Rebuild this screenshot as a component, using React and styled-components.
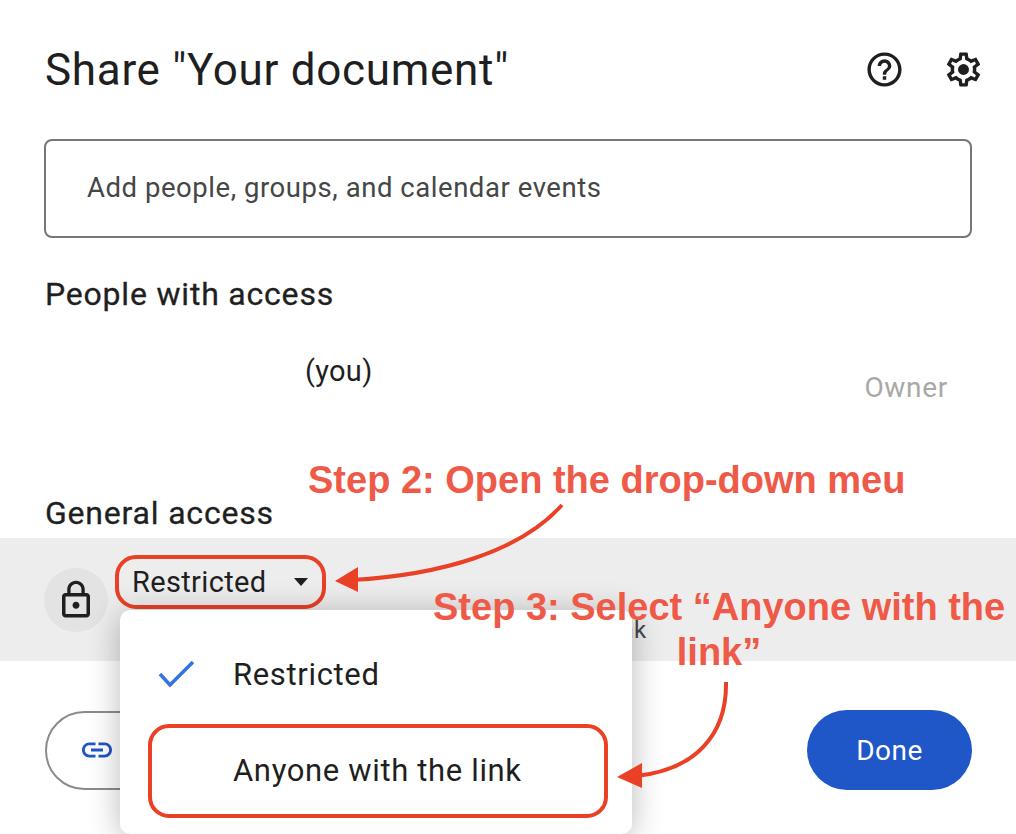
import React from 'react'
import styled, { createGlobalStyle } from 'styled-components'
import { MdHelpOutline, MdLink, MdLockOutline } from 'react-icons/md'

const Global = createGlobalStyle`
  html, body { margin: 0; padding: 0; background: #fff; }
  body { font-family: Roboto, "Liberation Sans", sans-serif; color: #1f1f1f; }
`

const Page = styled.div`
  position: relative;
  width: 1016px;
  height: 834px;
  overflow: hidden;
  background: #fff;
`

const Header = styled.div`
  display: flex;
  align-items: center;
  height: 139px;
  padding: 0 32px 0 45px;
  box-sizing: border-box;
`

const Title = styled.h1`
  flex: 1;
  margin: 0;
  font-size: 44px;
  font-weight: 400;
  letter-spacing: 0.7px;
  line-height: 48px;
`

const IconBtn = styled.div`
  display: flex;
  align-items: center;
  justify-content: center;
  width: 41px;
  height: 41px;
  margin-left: ${p => p.$gap || 0}px;
  color: #1f1f1f;
`

const SearchBox = styled.div`
  display: flex;
  align-items: center;
  height: 99px;
  width: 928px;
  margin-left: 44px;
  padding: 0 0 3px 41px;
  box-sizing: border-box;
  border: 2px solid #747775;
  border-radius: 8px;
  font-size: 27.5px;
  letter-spacing: 0.55px;
  color: #444746;
`

const SectionTitle = styled.h2`
  margin: ${p => p.$top}px 0 0 45px;
  font-size: 32px;
  font-weight: 400;
  letter-spacing: 0.8px;
  line-height: 38px;
  color: #1f1f1f;
  -webkit-text-stroke: 0.3px #1f1f1f;
`

const PersonRow = styled.div`
  display: flex;
  height: 181px;
  padding-left: 305px;
  padding-right: 68px;
`

const You = styled.span`
  flex: 1;
  margin-top: 42px;
  font-size: 29px;
  font-weight: 400;
  letter-spacing: 0.3px;
  line-height: 32px;
`

const Owner = styled.span`
  margin-top: 59px;
  font-size: 28px;
  letter-spacing: 0.7px;
  line-height: 32px;
  color: #a8a8a8;
`

const AccessBand = styled.div`
  display: flex;
  align-items: flex-start;
  height: 123px;
  margin-top: 6px;
  padding: 30px 0 0 44px;
  box-sizing: border-box;
  background: #ededed;
`

const LockCircle = styled.div`
  display: flex;
  align-items: center;
  justify-content: center;
  width: 64px;
  height: 64px;
  border-radius: 50%;
  background: #e3e3e3;
  color: #1f1f1f;
`

const AccessInfo = styled.div`
  margin-left: 12px;
`

const Select = styled.div`
  display: flex;
  align-items: center;
  height: 54px;
  width: 211px;
  margin: -13px 0 0 -5px;
  padding-left: 13px;
  box-sizing: border-box;
  border: 4.5px solid #ea4025;
  border-radius: 21px;
  font-size: 29px;
  letter-spacing: 0.35px;
`

const Caret = styled.span`
  width: 0;
  height: 0;
  margin-left: 28px;
  border-left: 7.5px solid transparent;
  border-right: 7.5px solid transparent;
  border-top: 8px solid #1f1f1f;
`

const AccessHint = styled.div`
  margin-top: 6px;
  padding-left: 11px;
  font-size: 24px;
  letter-spacing: 0.45px;
  line-height: 30px;
  color: #444746;
  white-space: nowrap;
`

const Footer = styled.div`
  display: flex;
  align-items: center;
  justify-content: space-between;
  margin-top: 49px;
  padding: 0 44px 0 45px;
`

const CopyLink = styled.div`
  display: flex;
  align-items: center;
  gap: 12px;
  width: 360px;
  height: 79px;
  padding-left: 32px;
  box-sizing: border-box;
  border: 2px solid #8a8c8a;
  border-radius: 40px;
  font-size: 26px;
  font-weight: 500;
  color: #1f56c8;
`

const Done = styled.div`
  display: flex;
  align-items: center;
  justify-content: center;
  width: 165px;
  height: 80px;
  border-radius: 40px;
  background: #1f56c8;
  color: #fff;
  font-size: 28px;
  font-weight: 400;
  letter-spacing: 0.5px;
`

/* things lying over the dialog */
const Menu = styled.div`
  position: absolute;
  left: 120px;
  top: 610px;
  width: 512px;
  height: 224px;
  border-radius: 10px;
  background: #fff;
  box-shadow: 0 4px 32px rgba(0, 0, 0, 0.28);
`

const MenuItem = styled.div`
  display: flex;
  align-items: center;
  height: 96px;
  padding-left: 113px;
  font-size: 31px;
  letter-spacing: 0.65px;
  position: relative;
  margin-top: ${p => p.$top || 0}px;
`

const Check = styled.svg`
  position: absolute;
  left: 38px;
  top: 50%;
  margin-top: -15px;
`

const Highlight = styled.div`
  position: absolute;
  left: 28px;
  top: 114px;
  width: 460px;
  height: 94px;
  box-sizing: border-box;
  border: 4.5px solid #ea4025;
  border-radius: 21px;
`

const Note = styled.div`
  position: absolute;
  left: ${p => p.$x}px;
  top: ${p => p.$y}px;
  width: ${p => p.$w || 'auto'};
  font-family: "Liberation Sans", Arial, sans-serif;
  font-weight: 700;
  font-size: 38px;
  line-height: 45px;
  color: #ef5a48;
  text-align: center;
  white-space: nowrap;
`

const Arrows = styled.svg`
  position: absolute;
  left: 0;
  top: 0;
  pointer-events: none;
`

const GearIcon = () => (
  <svg width="41" height="41" viewBox="0 0 24 24" fill="currentColor">
    <path d="M19.43 12.98c.04-.32.07-.64.07-.98 0-.34-.03-.66-.07-.98l2.11-1.65c.19-.15.24-.42.12-.64l-2-3.46c-.09-.16-.26-.25-.44-.25-.06 0-.12.01-.17.03l-2.49 1c-.52-.4-1.08-.73-1.69-.98l-.38-2.65C14.46 2.18 14.25 2 14 2h-4c-.25 0-.46.18-.49.42l-.38 2.65c-.61.25-1.17.59-1.69.98l-2.49-1c-.06-.02-.12-.03-.18-.03-.17 0-.34.09-.43.25l-2 3.46c-.13.22-.07.49.12.64l2.11 1.65c-.04.32-.07.65-.07.98 0 .33.03.66.07.98l-2.11 1.65c-.19.15-.24.42-.12.64l2 3.46c.09.16.26.25.44.25.06 0 .12-.01.17-.03l2.49-1c.52.4 1.08.73 1.69.98l.38 2.65c.03.24.24.42.49.42h4c.25 0 .46-.18.49-.42l.38-2.65c.61-.25 1.17-.59 1.69-.98l2.49 1c.06.02.12.03.18.03.17 0 .34-.09.43-.25l2-3.46c.12-.22.07-.49-.12-.64l-2.11-1.65zm-1.98-1.71c.04.31.05.52.05.73 0 .21-.02.43-.05.73l-.14 1.13.89.7 1.08.84-.7 1.21-1.27-.51-1.04-.42-.9.68c-.43.32-.84.56-1.25.73l-1.06.43-.16 1.13-.2 1.35h-1.4l-.19-1.35-.16-1.13-1.06-.43c-.43-.18-.83-.41-1.23-.71l-.91-.7-1.06.43-1.27.51-.7-1.21 1.08-.84.89-.7-.14-1.13c-.03-.31-.05-.54-.05-.74s.02-.43.05-.73l.14-1.13-.89-.7-1.08-.84.7-1.21 1.27.51 1.04.42.9-.68c.43-.32.84-.56 1.25-.73l1.06-.43.16-1.13.2-1.35h1.39l.19 1.35.16 1.13 1.06.43c.43.18.83.41 1.23.71l.91.7 1.06-.43 1.27-.51.7 1.21-1.07.85-.89.7.14 1.13z" />
    <circle cx="12" cy="12" r="3.2" />
  </svg>
)

export default function App() {
  return (
    <Page>
      <Global />
      <Header>
        <Title>Share "Your document"</Title>
        <IconBtn><MdHelpOutline size={41} /></IconBtn>
        <IconBtn $gap={38}><GearIcon /></IconBtn>
      </Header>
      <SearchBox>Add people, groups, and calendar events</SearchBox>
      <SectionTitle $top={37}>People with access</SectionTitle>
      <PersonRow>
        <You>(you)</You>
        <Owner>Owner</Owner>
      </PersonRow>
      <SectionTitle $top={0}>General access</SectionTitle>
      <AccessBand>
        <LockCircle><MdLockOutline size={42} /></LockCircle>
        <AccessInfo>
          <Select>Restricted<Caret /></Select>
          <AccessHint>Only people with access can open with the link</AccessHint>
        </AccessInfo>
      </AccessBand>
      <Footer>
        <CopyLink><MdLink size={36} />Copy link</CopyLink>
        <Done>Done</Done>
      </Footer>

      <Menu>
        <MenuItem $top={16}>
          <Check width="36" height="30" viewBox="0 0 36 30" fill="none">
            <path d="M2 15 L12 26 L35 3" stroke="#3573e0" strokeWidth="3.6" />
          </Check>
          Restricted
        </MenuItem>
        <MenuItem>Anyone with the link</MenuItem>
        <Highlight />
      </Menu>

      <Note $x={308} $y={458}>Step 2: Open the drop-down meu</Note>
      <Note $x={433} $y={585} $w="572px">Step 3: Select “Anyone with the<br />link”</Note>

      <Arrows width="1016" height="834" viewBox="0 0 1016 834" fill="none">
        <path d="M562 505 C520 552 440 575 352 580" stroke="#ea4025" strokeWidth="4" />
        <path d="M335 581 L358 567 L358 592 Z" fill="#ea4025" />
        <path d="M726 682 C727 735 695 770 636 776" stroke="#ea4025" strokeWidth="4" />
        <path d="M617 777 L642 763 L642 788 Z" fill="#ea4025" />
      </Arrows>
    </Page>
  )
}
